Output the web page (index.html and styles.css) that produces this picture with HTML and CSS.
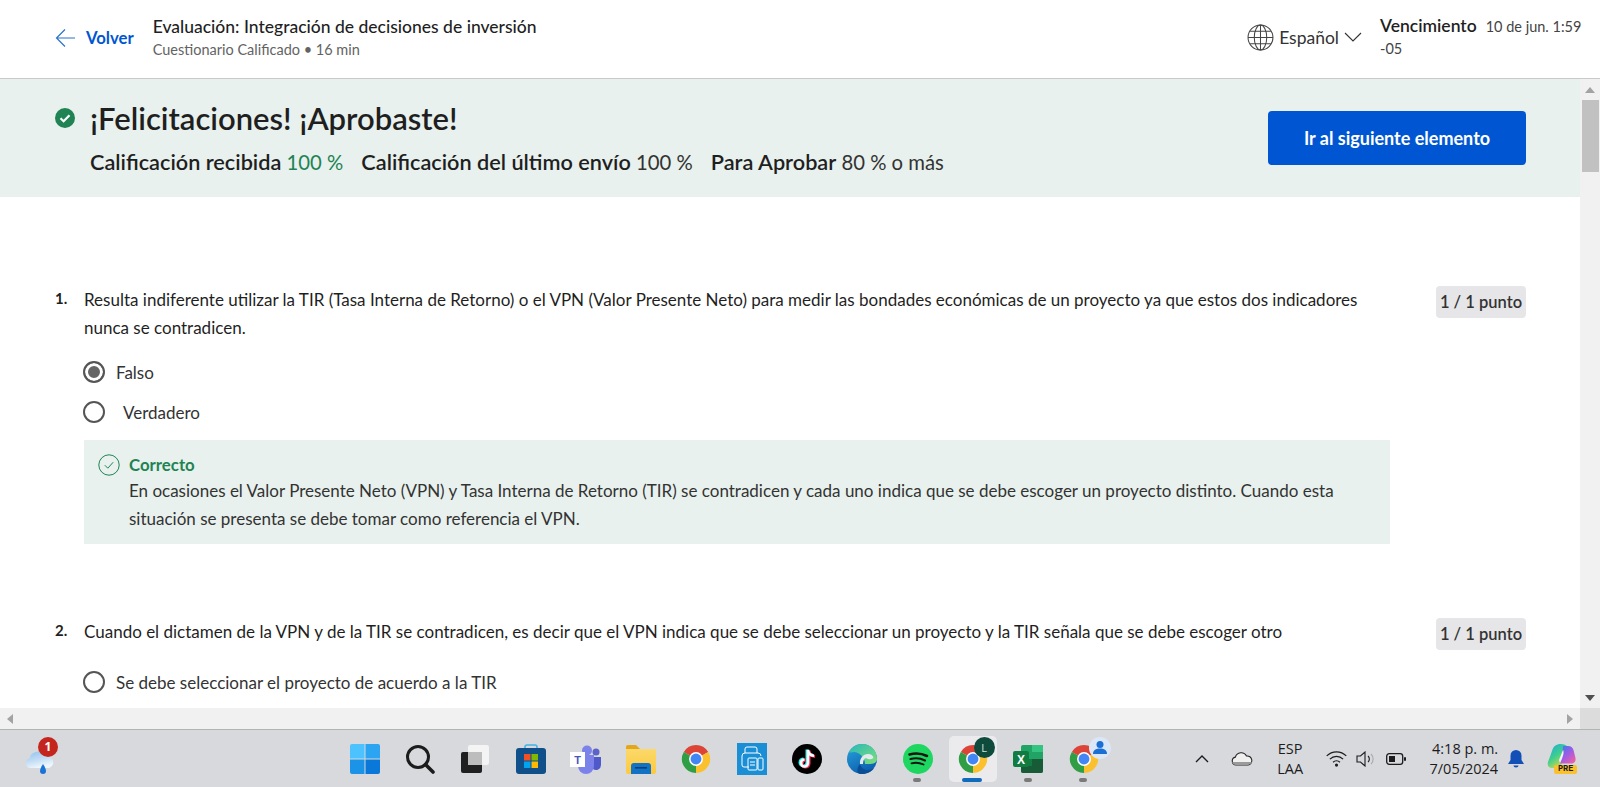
FILE: index.html
```html
<!DOCTYPE html>
<html lang="es">
<head>
<meta charset="utf-8">
<title>Evaluación: Integración de decisiones de inversión</title>
<link rel="stylesheet" href="styles.css">
</head>
<body>
<svg class="defs" width="0" height="0" aria-hidden="true">
  <defs>
    <linearGradient id="edgeBlue" x1="0" y1="0" x2=".5" y2="1"><stop offset="0" stop-color="#2aa6dc"/><stop offset="1" stop-color="#0c5fb0"/></linearGradient>
    <linearGradient id="edgeGreen" x1="0" y1="0" x2="1" y2="1"><stop offset="0" stop-color="#28b8b8"/><stop offset="1" stop-color="#7fe07a"/></linearGradient>
    <linearGradient id="coLeft" x1="0" y1="0" x2=".6" y2="1"><stop offset="0" stop-color="#1fa8e0"/><stop offset=".55" stop-color="#3ecf8e"/><stop offset="1" stop-color="#d8d84a"/></linearGradient>
    <linearGradient id="coRight" x1="0" y1="0" x2=".8" y2="1"><stop offset="0" stop-color="#2f7fe8"/><stop offset=".5" stop-color="#9a5ce6"/><stop offset="1" stop-color="#ee5fa8"/></linearGradient>
    <linearGradient id="folderBody" x1="0" y1="0" x2="0" y2="1"><stop offset="0" stop-color="#fbd96a"/><stop offset="1" stop-color="#fdc93f"/></linearGradient>
    <linearGradient id="cloudFill" x1="0" y1="0" x2=".4" y2="1"><stop offset="0" stop-color="#8fc3ee"/><stop offset=".6" stop-color="#c5def5"/><stop offset="1" stop-color="#eef6fc"/></linearGradient>
  </defs>
  <symbol id="chrome" viewBox="0 0 32 32">
    <path d="M16 16 29 8.5A15 15 0 0 0 3 8.5Z" fill="#db4437"/>
    <path d="M16 16 3 8.5A15 15 0 0 0 16 31Z" fill="#2f9e44"/>
    <path d="M16 16 16 31A15 15 0 0 0 29 8.5Z" fill="#fbc02d"/>
    <circle cx="16" cy="16" r="7.4" fill="#fff"/>
    <circle cx="16" cy="16" r="5.8" fill="#4285f4"/>
  </symbol>
</svg>

<header class="topbar">
  <a class="back">
    <svg class="back-arrow" viewBox="0 0 20 20" width="20" height="20"><path d="M20 10H1.5M10 1.5 1.5 10l8.5 8.5" fill="none" stroke="#2a73cc" stroke-width="1.2"/></svg>
    <span>Volver</span>
  </a>
  <div class="title-block">
    <div class="title">Evaluación: Integración de decisiones de inversión</div>
    <div class="subtitle">Cuestionario Calificado • 16 min</div>
  </div>
  <div class="lang">
    <svg viewBox="0 0 26 26" width="27" height="27"><g fill="none" stroke="#444" stroke-width="1"><circle cx="13" cy="13" r="12"/><ellipse cx="13" cy="13" rx="6" ry="12"/><path d="M13 1v24M1 13h24M3 7h20M3 19h20"/></g></svg>
    <span>Español</span>
    <svg viewBox="0 0 18 10" width="18" height="10"><path d="M1 1l8 8 8-8" fill="none" stroke="#333" stroke-width="1.1"/></svg>
  </div>
  <div class="due">
    <div class="due-row"><strong>Vencimiento</strong><span>10 de jun. 1:59</span></div>
    <div>-05</div>
  </div>
</header>

<div class="viewport">
  <main class="content">
    <section class="banner">
      <div class="banner-text">
        <h1 class="banner-title">
          <svg viewBox="0 0 20 20" width="20" height="20"><circle cx="10" cy="10" r="10" fill="#1f8354"/><path d="M5.5 10.2l3.1 3 5.9-6" fill="none" stroke="#fff" stroke-width="2.2"/></svg>
          ¡Felicitaciones! ¡Aprobaste!
        </h1>
        <div class="stats">
          <span><b>Calificación recibida</b> <em>100 %</em></span>
          <span><b>Calificación del último envío</b> 100 %</span>
          <span><b>Para Aprobar</b> 80 % o más</span>
        </div>
      </div>
      <button class="next">Ir al siguiente elemento</button>
    </section>

    <section class="question first">
      <div class="q-num">1.</div>
      <div class="q-body">
        <p class="q-text">Resulta indiferente utilizar la TIR (Tasa Interna de Retorno) o el VPN (Valor Presente Neto) para medir las bondades económicas de un proyecto ya que estos dos indicadores nunca se contradicen.</p>
        <div class="option"><span class="radio checked"></span><span>Falso</span></div>
        <div class="option"><span class="radio"></span><span class="indent">Verdadero</span></div>
        <div class="feedback">
          <svg viewBox="0 0 22 22" width="22" height="22"><circle cx="11" cy="11" r="10.2" fill="none" stroke="#1f8354" stroke-width="1"/><path d="M6.8 11.2l3 3 5.4-6" fill="none" stroke="#1f8354" stroke-width="1"/></svg>
          <div>
            <div class="fb-title">Correcto</div>
            <div class="fb-text">En ocasiones el Valor Presente Neto (VPN) y Tasa Interna de Retorno (TIR) se contradicen y cada uno indica que se debe escoger un proyecto distinto. Cuando esta situación se presenta se debe tomar como referencia el VPN.</div>
          </div>
        </div>
      </div>
      <div class="points">1 / 1 punto</div>
    </section>

    <section class="question second">
      <div class="q-num">2.</div>
      <div class="q-body">
        <p class="q-text">Cuando el dictamen de la VPN y de la TIR se contradicen, es decir que el VPN indica que se debe seleccionar un proyecto y la TIR señala que se debe escoger otro</p>
        <div class="option"><span class="radio"></span><span>Se debe seleccionar el proyecto de acuerdo a la TIR</span></div>
      </div>
      <div class="points">1 / 1 punto</div>
    </section>
  </main>
  <div class="vscroll">
    <span class="tri tri-up"></span>
    <span class="thumb"></span>
    <span class="tri tri-down"></span>
  </div>
</div>

<div class="hscroll">
  <div class="htrack"><span class="tri tri-left"></span><span class="tri tri-right"></span></div>
  <div class="corner"></div>
</div>

<footer class="taskbar">
  <div class="weather">
    <svg viewBox="0 0 30 26" width="30" height="26"><path d="M6 18a5 5 0 0 1-1.500-9.800A8.500 8.500 0 0 1 20.500 6.500 6 6 0 0 1 24 18Z" fill="url(#cloudFill)"/><path d="M18 14c2.200 3.500 3 5.500 3 7a3 3 0 0 1-6 0c0-1.500.8-3.500 3-7Z" fill="#1a74d6"/></svg>
    <span class="w-badge">1</span>
  </div>
  <div class="apps">
    <div class="app"><svg viewBox="0 0 30 30" width="30" height="30"><path d="M0 2a2 2 0 0 1 2-2h12.500v14.500H0Z" fill="#4cc2ff"/><path d="M15.500 0H28a2 2 0 0 1 2 2v12.500H15.500Z" fill="#2ba4f2"/><path d="M0 15.500h14.500V30H2a2 2 0 0 1-2-2Z" fill="#1b94e8"/><path d="M15.500 15.500H30V28a2 2 0 0 1-2 2H15.500Z" fill="#0a78d8"/></svg></div>
    <div class="app"><svg viewBox="0 0 30 30" width="30" height="30"><circle cx="13" cy="13" r="10.500" fill="none" stroke="#1c1c1c" stroke-width="3"/><path d="M20.500 20.500 28 28" stroke="#1c1c1c" stroke-width="3.600" stroke-linecap="round"/></svg></div>
    <div class="app"><svg viewBox="0 0 30 30" width="30" height="30"><rect x="8" y="1" width="21" height="20" rx="2" fill="#f4f4f4"/><rect x="1" y="8" width="21" height="21" rx="2" fill="#202020"/><rect x="8" y="8" width="14" height="13" fill="#bdbdbd"/></svg></div>
    <div class="app"><svg viewBox="0 0 30 30" width="30" height="30"><path d="M9 7V3a2 2 0 0 1 2-2h8a2 2 0 0 1 2 2v4" fill="none" stroke="#3fb4e8" stroke-width="1.500"/><rect x="0" y="4" width="30" height="26" rx="3" fill="#0f4f8a"/><rect x="8" y="10" width="6.500" height="6.500" fill="#f25022"/><rect x="15.500" y="10" width="6.500" height="6.500" fill="#7fba00"/><rect x="8" y="17.500" width="6.500" height="6.500" fill="#00a4ef"/><rect x="15.500" y="17.500" width="6.500" height="6.500" fill="#ffb900"/></svg></div>
    <div class="app"><svg viewBox="0 0 32 30" width="32" height="30"><circle cx="26" cy="8" r="3.500" fill="#5b63c9"/><path d="M20 13h11v8a5 5 0 0 1-8 4Z" fill="#5059c9"/><circle cx="17" cy="6.500" r="5" fill="#7b83eb"/><path d="M8 11h16v11a8 8 0 0 1-16 0Z" fill="#7b83eb"/><rect x="0" y="8" width="15" height="15" fill="#fff"/><text class="t-letter" x="7.500" y="20" text-anchor="middle">T</text></svg></div>
    <div class="app"><svg viewBox="0 0 32 30" width="32" height="30"><path d="M1 3a2 2 0 0 1 2-2h8l4 4H1Z" fill="#e3a71c"/><path d="M1 5h30v23a2 2 0 0 1-2 2H3a2 2 0 0 1-2-2Z" fill="url(#folderBody)"/><path d="M6 30v-8a3 3 0 0 1 3-3h14a3 3 0 0 1 3 3v8Z" fill="#1272c4"/><rect x="10" y="23" width="12" height="1.600" fill="#0a3f78"/></svg></div>
    <div class="app"><svg width="30" height="30"><use href="#chrome"/></svg></div>
    <div class="app"><svg viewBox="0 0 30 32" width="30" height="32"><rect width="30" height="32" fill="#1a8fd6"/><g fill="none" stroke="#fff" stroke-width="1"><path d="M8 10V6a2 2 0 0 1 2-2h8a2 2 0 0 1 2 2v4"/><path d="M12 24H7a2 2 0 0 1-2-2v-9a3 3 0 0 1 3-3h13a3 3 0 0 1 3 3"/><rect x="11" y="15" width="9" height="12" rx="1"/><rect x="21" y="15" width="5" height="12" rx="1"/><path d="M13 19h5M13 22h5"/></g></svg></div>
    <div class="app"><svg viewBox="0 0 30 30" width="30" height="30"><circle cx="15" cy="15" r="15" fill="#000"/><path d="M16 6v13a3.500 3.500 0 1 1-3.500-3.500M16 6c.3 3 2.500 5.500 6 5.800" fill="none" stroke="#25f4ee" stroke-width="3" transform="translate(-1 -.6)"/><path d="M16 6v13a3.500 3.500 0 1 1-3.500-3.500M16 6c.3 3 2.500 5.500 6 5.800" fill="none" stroke="#fe2c55" stroke-width="3" transform="translate(1 .6)"/><path d="M16 6v13a3.500 3.500 0 1 1-3.500-3.500M16 6c.3 3 2.500 5.500 6 5.800" fill="none" stroke="#fff" stroke-width="2.600"/></svg></div>
    <div class="app"><svg viewBox="0 0 30 30" width="30" height="30"><circle cx="15" cy="15" r="15" fill="url(#edgeBlue)"/><path d="M15 0c9 0 15 6.500 15 15 0 3-3 5-7 5h-5C18 13 12 8 7 8 5 8 3 9 2 8 5 3 10 0 15 0Z" fill="url(#edgeGreen)"/><path d="M13 20c-.5-5.500 3-10 8-10 3 0 5 1.500 5.500 4-2 1.500-4 1.500-5.500 1-1.500-.5-2-1-3-.5-1.500 1-2 3-2 5.500Z" fill="#e3e9ec"/><path d="M13 20c1 4 5 6.500 9 6 2.200-.3 4-1 5.500-2.500C25 27.500 20.500 30 15 30c-2 0-3.500-.5-4.500-1.500C10 25 11 22 13 20Z" fill="#0a4f96"/></svg></div>
    <div class="app has-dot"><svg viewBox="0 0 30 30" width="30" height="30"><circle cx="15" cy="15" r="15" fill="#1ed760"/><g fill="none" stroke="#141414" stroke-linecap="round"><path d="M6.500 10.500c6-1.700 12-1.200 17.500 1.500" stroke-width="2.600"/><path d="M7.500 15c5-1.300 10-.8 14.500 1.400" stroke-width="2.200"/><path d="M8.500 19.300c4-1 8-.7 12 1.200" stroke-width="1.800"/></g></svg></div>
    <div class="app active">
      <svg width="30" height="30"><use href="#chrome"/></svg>
      <span class="avatar avatar-l">L</span>
    </div>
    <div class="app has-dot"><svg viewBox="0 0 30 30" width="30" height="30"><rect x="8" y="1" width="22" height="28" rx="2" fill="#21a366"/><rect x="19" y="1" width="11" height="7" fill="#33c481"/><rect x="8" y="8" width="11" height="7" fill="#21a366"/><rect x="19" y="8" width="11" height="7" fill="#21a366"/><rect x="8" y="15" width="11" height="7" fill="#107c41"/><rect x="19" y="15" width="11" height="7" fill="#185c37"/><path d="M8 22h22v5a2 2 0 0 1-2 2H10a2 2 0 0 1-2-2Z" fill="#185c37"/><rect x="0" y="7" width="16" height="16" rx="2" fill="#107c41"/><text class="x-letter" x="8" y="19.500" text-anchor="middle">X</text></svg></div>
    <div class="app has-dot">
      <svg width="30" height="30"><use href="#chrome"/></svg>
      <span class="avatar avatar-p"><svg viewBox="0 0 18 18" width="18" height="18"><circle cx="9" cy="5.500" r="3.500" fill="#1a6fd4"/><path d="M2 15c0-4 3-5.500 7-5.500s7 1.500 7 5.500Z" fill="#1a6fd4"/></svg></span>
    </div>
  </div>
  <div class="tray">
    <svg class="caret" viewBox="0 0 14 8" width="14" height="8"><path d="M1 7l6-6 6 6" fill="none" stroke="#1c1c1c" stroke-width="1.400"/></svg>
    <svg class="cloud" viewBox="0 0 22 15" width="22" height="15"><path d="M5 14a4 4 0 0 1-.6-7.900A6 6 0 0 1 15.500 5 4.500 4.500 0 0 1 17 14Z" fill="#f0f0f0" stroke="#222" stroke-width="1.100"/><path d="M5 14a4 4 0 0 1-3.800-3h19.600a4.500 4.500 0 0 1-3.800 3Z" fill="#9a9a9a"/></svg>
    <div class="ime"><span>ESP</span><span>LAA</span></div>
    <svg class="wifi" viewBox="0 0 20 16" width="21" height="17"><g fill="none" stroke="#1c1c1c" stroke-width="1.200"><path d="M.7 5.500a13 13 0 0 1 18.600 0"/><path d="M3.700 8.600a9 9 0 0 1 12.600 0"/><path d="M6.700 11.500a4.800 4.800 0 0 1 6.600 0"/></g><circle cx="10" cy="14.300" r="1.500" fill="#1c1c1c"/></svg>
    <svg class="vol" viewBox="0 0 20 16" width="20" height="16"><path d="M1 5h3.500L9 1v14L4.500 11H1Z" fill="none" stroke="#1c1c1c" stroke-width="1.100"/><path d="M12 5a4 4 0 0 1 0 6" fill="none" stroke="#1c1c1c" stroke-width="1.100"/><path d="M15 3a7 7 0 0 1 0 10" fill="none" stroke="#aaa" stroke-width="1.100"/></svg>
    <svg class="bat" viewBox="0 0 20 12" width="20" height="12"><rect x=".7" y=".7" width="16" height="10.600" rx="2.500" fill="none" stroke="#1c1c1c" stroke-width="1.300"/><rect x="3" y="3" width="6" height="6" fill="#1c1c1c"/><rect x="18" y="4" width="2" height="4" rx="1" fill="#1c1c1c"/></svg>
    <div class="clock"><span>4:18 p. m.</span><span>7/05/2024</span></div>
    <svg class="bell" viewBox="0 0 16 18" width="16" height="18"><path d="M8 0a5.500 5.500 0 0 1 5.500 5.500V10l2.500 4H0l2.500-4V5.500A5.500 5.500 0 0 1 8 0Z" fill="#1250b8"/><path d="M5.500 15.500h5a2.500 2 0 0 1-5 0Z" fill="#1250b8"/></svg>
    <div class="copilot">
      <svg viewBox="0 0 29 24" width="29" height="24"><path d="M14 0c-5 0-7.500 2-9 7L1 18c-1 3 .5 6 3.500 6H13l3-7 2-9 2-6c-1.500-1.300-3.500-2-6-2Z" fill="url(#coLeft)"/><path d="M16 2h5c3 0 4.500 1.500 5.500 4l2 8c.5 3-1 5.500-4 5.500H13l2-6Z" fill="url(#coRight)"/><path d="M16 6c1.500 2 0 7-3 13l-1-3Z" fill="#f2f2f6"/></svg>
      <span class="pre">PRE</span>
    </div>
  </div>
</footer>
</body>
</html>
```

FILE: styles.css
```css
* { box-sizing: border-box; }
html, body { margin: 0; height: 100%; overflow: hidden; }
body {
  display: flex;
  flex-direction: column;
  height: 787px;
  font-family: "Lato", "Liberation Sans", sans-serif;
  font-size: 16px;
  color: #1f1f1f;
  background: #fff;
}
.defs { position: absolute; }

/* top bar */
.topbar {
  flex: 0 0 79px;
  display: flex;
  align-items: center;
  padding: 0 0 4px 55px;
  background: #fff;
  border-bottom: 1px solid #c9c9c9;
}
.back { display: flex; align-items: center; gap: 11px; margin-top: 2px; color: #0056d2; font-weight: 700; font-size: 16.700px; }
.title-block { margin: 3px 0 0 19px; }
.title { font-size: 17.500px; font-weight: 500; line-height: 22px; color: #1f1f1f; }
.subtitle { font-size: 14.500px; line-height: 22px; margin-top: 1px; color: #636363; }
.lang { margin-left: auto; display: flex; align-items: center; gap: 5px; font-size: 17.500px; color: #333; }
.due { width: 204px; margin-left: 18px; margin-right: 16px; font-size: 14.500px; line-height: 22px; color: #444; }
.due strong { font-size: 17.500px; color: #1f1f1f; margin-right: 9px; font-weight: 600; }

/* scrolling area */
.viewport { flex: 1 1 auto; min-height: 0; display: flex; }
.content { flex: 1 1 auto; min-width: 0; overflow: hidden; }
.vscroll { flex: 0 0 20px; background: #f1f1f1; display: flex; flex-direction: column; align-items: center; padding-top: 8px; }
.thumb { width: 17px; height: 72px; margin-top: 7px; background: #c1c1c1; }
.tri { display: block; width: 0; height: 0; border: 5px solid transparent; }
.tri-up { border-top-width: 0; border-bottom: 6px solid #a3a3a3; }
.tri-down { border-bottom-width: 0; border-top: 6px solid #505050; margin-top: auto; margin-bottom: 7px; }
.tri-left { border-left-width: 0; border-right: 6px solid #a3a3a3; }
.tri-right { border-right-width: 0; border-left: 6px solid #a3a3a3; }
.hscroll { flex: 0 0 21px; display: flex; }
.htrack { flex: 1 1 auto; background: #f1f1f1; display: flex; align-items: center; justify-content: space-between; padding: 0 7px; }
.corner { flex: 0 0 20px; background: #dcdcdc; }

/* banner */
.banner {
  height: 118px;
  display: flex;
  align-items: flex-start;
  justify-content: space-between;
  padding: 20px 54px 0 55px;
  background: #e8f1ed;
}
.banner-title { margin: 0; display: flex; align-items: center; gap: 15px; font-size: 31px; line-height: 38px; font-weight: 600; }
.stats { display: flex; gap: 18px; margin-left: 35px; margin-top: 12px; font-size: 20.300px; line-height: 26px; color: #333; }
.stats b { font-size: 21.700px; font-weight: 600; color: #1f1f1f; }
.stats em { font-style: normal; color: #1f8354; }
.next {
  width: 258px;
  height: 54px;
  margin-top: 12px;
  border: 0;
  border-radius: 4px;
  background: #0056d2;
  color: #fff;
  font: 700 18px "Lato", sans-serif;
}

/* questions */
.question { display: flex; padding: 0 54px 0 55px; }
.first { margin-top: 89px; }
.second { margin-top: 74px; }
.q-num { flex: 0 0 29px; font-weight: 700; font-size: 15px; line-height: 24px; }
.q-body { flex: 0 0 1306px; }
.q-text { margin: 0; max-width: 1290px; font-size: 17px; line-height: 28px; color: #1f1f1f; }
.points {
  margin-left: auto;
  width: 90px;
  height: 32px;
  border-radius: 4px;
  background: #e6e6e8;
  font-weight: 600;
  font-size: 16.500px;
  line-height: 32px;
  text-align: center;
  color: #333;
}
.first .q-text + .option { margin-top: 10px; }
.option { display: flex; align-items: center; gap: 11px; height: 40px; color: #333; font-size: 17px; }
.second .option { margin-top: 16px; }
.indent { margin-left: 7px; }
.radio { flex: none; width: 22px; height: 22px; border: 2px solid #555; border-radius: 50%; background: #fff; margin-left: -1px; }
.radio.checked { background: #666; box-shadow: inset 0 0 0 3px #fff; }
.feedback {
  display: flex;
  gap: 9px;
  height: 104px;
  margin-top: 8px;
  padding: 13px 0 0 14px;
  background: #e8f1ed;
}
.feedback > svg { flex: none; margin-top: 1px; }
.fb-title { color: #1f8354; font-weight: 700; font-size: 16.800px; line-height: 24px; }
.fb-text { max-width: 1215px; font-size: 17px; line-height: 28px; color: #333; }

/* taskbar */
.taskbar {
  flex: 0 0 58px;
  display: flex;
  align-items: center;
  position: relative;
  background: #d8d9dd;
  border-top: 1px solid #b3b3b3;
  font-family: "Open Sans", sans-serif;
  color: #1c1c1c;
}
.weather { position: relative; width: 30px; height: 26px; margin: 9px 0 0 25px; }
.w-badge {
  position: absolute;
  left: 13px;
  top: -13px;
  width: 20px;
  height: 20px;
  border-radius: 50%;
  background: #c4261d;
  color: #fff;
  font-size: 12px;
  font-weight: 700;
  line-height: 20px;
  text-align: center;
}
.apps { display: grid; grid-template-columns: repeat(14, 55.300px); margin-left: 282px; }
.app { position: relative; height: 46px; display: flex; align-items: center; justify-content: center; }
.app.active { margin: 0 4px; background: #ebebee; border-radius: 5px; }
.app.active::after { content: ""; position: absolute; bottom: 0; left: 13px; width: 20px; height: 4px; border-radius: 2px; background: #0f6cbd; }
.has-dot::after { content: ""; position: absolute; bottom: 0; left: 23px; width: 8px; height: 4px; border-radius: 2px; background: #7a7a7a; }
.avatar { position: absolute; display: flex; align-items: center; justify-content: center; border-radius: 50%; }
.avatar-l { right: 2px; top: 1px; width: 21px; height: 21px; background: #0f4b3c; color: #cfe0da; font-size: 11px; }
.avatar-p { right: 0; top: 1px; width: 22px; height: 22px; background: #dbe7f7; }
.t-letter { font: 700 11px "Liberation Sans", sans-serif; fill: #4b53bc; }
.x-letter { font: 700 12px "Liberation Sans", sans-serif; fill: #fff; }

.tray { display: flex; align-items: center; margin-left: 84px; }
.cloud { margin-left: 22px; }
.ime { width: 46px; margin-left: 14px; display: flex; flex-direction: column; align-items: center; font-size: 14.500px; line-height: 20px; }
.wifi { margin-left: 13px; }
.vol { margin-left: 9px; }
.bat { margin-left: 10px; }
.clock { width: 84px; margin-left: 8px; display: flex; flex-direction: column; align-items: flex-end; font-size: 14.500px; line-height: 20px; }
.bell { margin-left: 10px; }
.copilot { position: relative; width: 29px; height: 30px; margin-left: 23px; }
.pre {
  position: absolute;
  right: -1px;
  bottom: 0;
  width: 23px;
  height: 9px;
  border-radius: 2px;
  background: #fbc02d;
  color: #1c1c1c;
  font: 700 8.500px/9px "Liberation Mono", monospace;
  text-align: center;
}
```
